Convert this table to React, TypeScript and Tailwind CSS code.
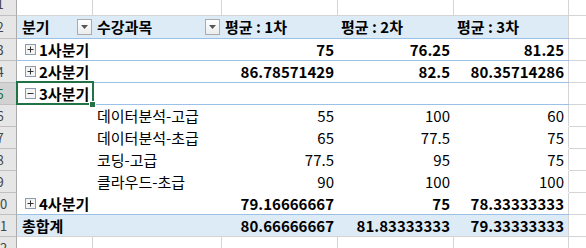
import React from "react";

const FONT = "font-['Noto_Sans_CJK_KR','Malgun_Gothic',sans-serif]";

type Line = "blue" | "none" | "gray";

interface RowData {
  n: number;
  h?: string;
  label?: string;
  kind: "empty" | "header" | "group" | "detail" | "total" | "open";
  values?: string[];
  bottom: Line;
}

const ROWS: RowData[] = [
  { n: 3, label: "1사분기", kind: "group", values: ["75", "76.25", "81.25"], bottom: "blue" },
  { n: 4, label: "2사분기", kind: "group", values: ["86.78571429", "82.5", "80.35714286"], bottom: "blue" },
  { n: 5, label: "3사분기", kind: "open", bottom: "blue" },
  { n: 6, label: "데이터분석-고급", kind: "detail", values: ["55", "100", "60"], bottom: "none" },
  { n: 7, label: "데이터분석-초급", kind: "detail", values: ["65", "77.5", "75"], bottom: "none" },
  { n: 8, label: "코딩-고급", kind: "detail", values: ["77.5", "95", "75"], bottom: "none" },
  { n: 9, label: "클라우드-초급", kind: "detail", values: ["90", "100", "100"], bottom: "none" },
  { n: 10, label: "4사분기", kind: "group", values: ["79.16666667", "75", "78.33333333"], bottom: "blue" },
  { n: 11, label: "총합계", kind: "total", values: ["80.66666667", "81.83333333", "79.33333333"], bottom: "gray" },
];

function RowNum({ n, selected, shift }: { n: number; selected?: boolean; shift?: boolean }) {
  return (
    <div
      className={`w-[17px] shrink-0 overflow-hidden border-r border-b ${
        selected ? "bg-[#D2D2D2] border-r-[#217346] text-[#217346]" : "bg-[#E6E6E6] border-r-[#ABABAB] text-[#444]"
      } border-b-[#C0C0C0]`}
    >
      <div className={`w-[34px] -ml-[17px] h-[22px] leading-[22px] text-center text-[13px] ${shift ? "-mt-[7px]" : ""}`}>
        {n}
      </div>
    </div>
  );
}

function FilterButton() {
  return (
    <div className="w-[15px] h-[16px] border border-[#ABABAB] bg-gradient-to-b from-white to-[#ECECEC] flex items-center justify-center">
      <svg width="7" height="4" viewBox="0 0 7 4">
        <polygon points="0,0 7,0 3.5,4" fill="#555" />
      </svg>
    </div>
  );
}

function Toggle({ open }: { open?: boolean }) {
  return (
    <svg width="11" height="11" viewBox="0 0 11 11" className="shrink-0">
      <rect x="0.5" y="0.5" width="10" height="10" fill="#F4F4F4" stroke="#8E9BAA" />
      <line x1="2.5" y1="5.5" x2="8.5" y2="5.5" stroke="#333" />
      {!open && <line x1="5.5" y1="2.5" x2="5.5" y2="8.5" stroke="#333" />}
    </svg>
  );
}

function GridRow({ n, h, shift }: { n: number; h: string; shift?: boolean }) {
  return (
    <div className={`flex ${h} overflow-hidden`}>
      <RowNum n={n} shift={shift} />
      <div className="w-[76px] border-r border-b border-[#D4D4D4]" />
      <div className="w-[129px] border-r border-b border-[#D4D4D4]" />
      <div className="w-[116px] border-r border-b border-[#D4D4D4]" />
      <div className="w-[116px] border-r border-b border-[#D4D4D4]" />
      <div className="w-[115px] border-r border-b border-[#D4D4D4]" />
      <div className="flex-1 border-b border-[#D4D4D4]" />
    </div>
  );
}

function PivotRow({ row }: { row: RowData }) {
  const bold = row.kind !== "detail";
  const bottom =
    row.bottom === "blue" ? "border-b-[#9BC2E6]" : row.bottom === "gray" ? "border-b-[#D4D4D4]" : "border-b-white";
  const bg = row.kind === "total" ? "bg-[#DDEBF7]" : "bg-white";
  return (
    <div className="flex h-[22px]">
      <RowNum n={row.n} selected={row.n === 5} />
      <div className={`flex w-[552px] border-b ${bottom} ${bg} ${bold ? "font-bold" : ""}`}>
        <div className="w-[76px] flex items-center">
          {row.kind === "group" && (
            <div className="flex items-center pl-[8px] gap-[3px]">
              <Toggle />
              <span>{row.label}</span>
            </div>
          )}
          {row.kind === "open" && (
            <div className="flex items-center pl-[8px] gap-[3px]">
              <Toggle open />
              <span>{row.label}</span>
            </div>
          )}
          {row.kind === "total" && <span className="pl-[5px]">{row.label}</span>}
        </div>
        <div className="w-[129px] flex items-center pl-[4px]">{row.kind === "detail" ? row.label : ""}</div>
        <div className="w-[116px] flex items-center justify-end pr-[4px]">{row.values?.[0]}</div>
        <div className="w-[116px] flex items-center justify-end pr-[4px]">{row.values?.[1]}</div>
        <div className="w-[115px] flex items-center justify-end pr-[4px] border-r border-r-[#D4D4D4]">{row.values?.[2]}</div>
      </div>
      <div className="flex-1 border-b border-[#D4D4D4] bg-white" />
    </div>
  );
}

export default function App() {
  return (
    <div className={`relative w-[586px] h-[248px] overflow-hidden bg-white text-black text-[15px] leading-[22px] ${FONT}`}>
      <GridRow n={1} h="h-[16px]" shift />

      {/* header row */}
      <div className="flex h-[23px]">
        <div className="w-[17px] shrink-0 overflow-hidden border-r border-b border-r-[#ABABAB] border-b-[#C0C0C0] bg-[#E6E6E6] text-[#444]">
          <div className="w-[34px] -ml-[17px] h-[22px] leading-[22px] text-center text-[13px]">2</div>
        </div>
        <div className="flex w-[552px] bg-[#DDEBF7] border-b border-b-[#9BC2E6] font-bold">
          <div className="w-[76px] flex items-center justify-between pl-[5px] pr-[1px]">
            <span>분기</span>
            <FilterButton />
          </div>
          <div className="w-[129px] flex items-center justify-between pl-[4px] pr-[2px]">
            <span>수강과목</span>
            <FilterButton />
          </div>
          <div className="w-[116px] flex items-center pl-[3px]">평균 : 1차</div>
          <div className="w-[116px] flex items-center pl-[3px]">평균 : 2차</div>
          <div className="w-[115px] flex items-center pl-[3px] border-r border-r-[#D4D4D4]">평균 : 3차</div>
        </div>
        <div className="flex-1 border-b border-[#D4D4D4]" />
      </div>

      {ROWS.map((r) => (
        <PivotRow key={r.n} row={r} />
      ))}

      <GridRow n={12} h="h-[22px]" />

      {/* active cell */}
      <div className="absolute left-[16px] top-[81px] w-[78px] h-[24px] border-2 border-[#217346]" />
      <div className="absolute left-[89px] top-[101px] w-[7px] h-[7px] bg-[#217346] border border-white" />
    </div>
  );
}
